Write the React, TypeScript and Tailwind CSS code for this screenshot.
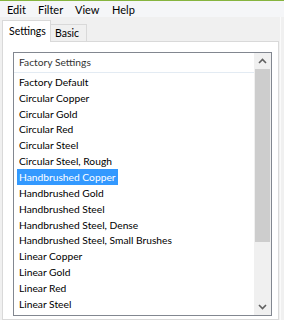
const items = [
  'Factory Default',
  'Circular Copper',
  'Circular Gold',
  'Circular Red',
  'Circular Steel',
  'Circular Steel, Rough',
  'Handbrushed Copper',
  'Handbrushed Gold',
  'Handbrushed Steel',
  'Handbrushed Steel, Dense',
  'Handbrushed Steel, Small Brushes',
  'Linear Copper',
  'Linear Gold',
  'Linear Red',
  'Linear Steel',
];

const selected = 'Handbrushed Copper';

const Chevron = ({ up }: { up?: boolean }) => (
  <svg width="9" height="6" viewBox="0 0 9 6" className={up ? '' : 'rotate-180'}>
    <path d="M1 5 L4.5 1.5 L8 5" fill="none" stroke="#606060" strokeWidth="1.6" />
  </svg>
);

export default function App() {
  return (
    <div
      className="relative flex h-[320px] w-[284px] flex-col overflow-hidden bg-[#f0f0f0] text-[10.25px] text-black"
      style={{ fontFamily: 'Lato, "Liberation Sans", sans-serif' }}
    >
      <div className="h-px bg-[#86b43f]" />

      {/* menu bar */}
      <div className="flex h-[16px] items-center bg-[#f5f6f8] pl-[7px] text-[11px] leading-none">
        <span className="w-[31px]">Edit</span>
        <span className="w-[37px]">Filter</span>
        <span className="w-[37px]">View</span>
        <span>Help</span>
      </div>

      {/* tabs */}
      <div className="relative z-10 flex h-[24px] items-end pl-[2px]">
        <div className="-mb-px flex h-[22px] w-[49px] items-start border border-b-0 border-[#d9d9d9] bg-white pl-[6px] pt-[3px] text-[10.5px] leading-[14px]">
          Settings
        </div>
        <div className="flex h-[17px] w-[36px] items-center border border-l-0 border-b-0 border-[#d9d9d9] bg-[#f0f0f0] pl-[4px] text-[10.5px] leading-none">
          Basic
        </div>
      </div>

      {/* panel */}
      <div className="ml-[2px] flex-1 w-[277px] border border-[#d9d9d9] bg-white pl-[10px] pt-[10px]">
        <div className="flex h-[264px] w-[259px] border border-[#828790] bg-white">
          <div className="flex-1 overflow-hidden">
            <div className="flex h-[20px] items-center border-b border-[#e3ebf3] pl-[5px] text-[#333]">
              Factory Settings
            </div>
            <div className="pt-px">
              {items.map((item) => (
                <div key={item} className="flex h-[15.86px] items-center pl-[3px] leading-none">
                  <span
                    className={
                      item === selected
                        ? 'flex h-[16px] items-center bg-[#3399ff] px-[2px] text-white'
                        : 'px-[2px]'
                    }
                  >
                    {item}
                  </span>
                </div>
              ))}
            </div>
          </div>

          {/* scrollbar */}
          <div className="flex w-[17px] flex-col bg-[#f0f0f0]">
            <div className="flex h-[16px] items-center justify-center">
              <Chevron up />
            </div>
            <div className="flex-1 px-px">
              <div className="h-[173px] bg-[#cdcdcd]" />
            </div>
            <div className="flex h-[17px] items-center justify-center">
              <Chevron />
            </div>
          </div>
        </div>
      </div>

      <div className="absolute right-[3px] top-[17px] h-[303px] w-px bg-[#fafafa]" />
    </div>
  );
}
